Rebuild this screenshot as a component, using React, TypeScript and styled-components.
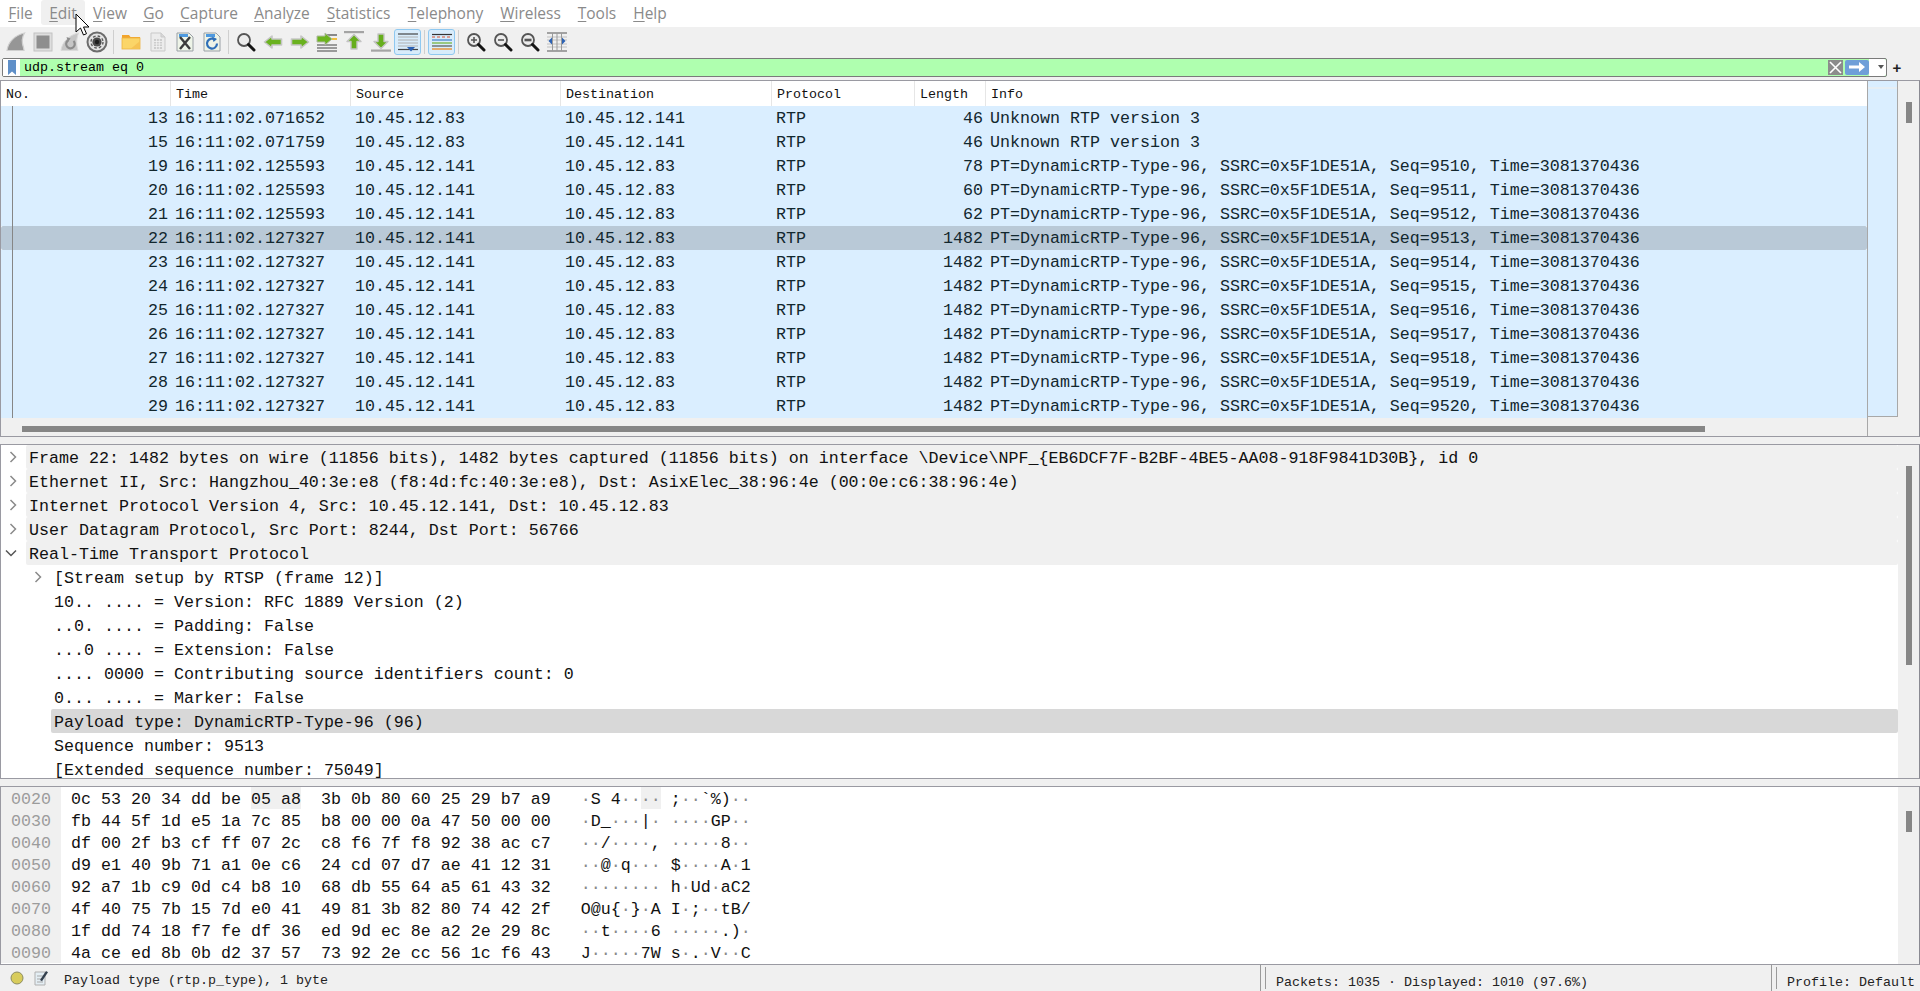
import React from "react";
import styled, { createGlobalStyle } from "styled-components";

const Global = createGlobalStyle`
  html, body { margin: 0; padding: 0; background: #f0f0f0; overflow: hidden; }
  #root { width: 1920px; height: 991px; }
`;

const MONO = `"Liberation Mono", "DejaVu Sans Mono", monospace`;

const Shell = styled.div`
  position: relative;
  width: 1920px;
  height: 991px;
  display: flex;
  flex-direction: column;
  background: #f0f0f0;
  overflow: hidden;
`;

const MenuBar = styled.div`
  display: flex;
  height: 27px;
  background: #ffffff;
  box-sizing: border-box;
  padding-bottom: 2px;
  font: 15.5px "Open Sans", "Noto Sans", sans-serif;
  color: #8a8a8a;
`;

const MenuItem = styled.div<{ $w: number; $hover?: boolean }>`
  width: ${(p) => p.$w}px;
  text-align: center;
  line-height: 26px;
  border-radius: 3px;
  background: ${(p) => (p.$hover ? "#f0f0f0" : "transparent")};
  u { text-underline-offset: 2px; text-decoration-thickness: 1px; }
`;

const Toolbar = styled.div`
  display: flex;
  align-items: center;
  height: 31px;
  box-sizing: border-box;
  padding: 1px 0 2px 2px;
  background: #f0f0f0;
`;

const ToolButton = styled.div<{ $on?: boolean }>`
  width: 27px;
  height: 26px;
  box-sizing: border-box;
  display: flex;
  align-items: center;
  justify-content: center;
  border-radius: 3px;
  border: 1px solid ${(p) => (p.$on ? "#8fc8f0" : "transparent")};
  background: ${(p) => (p.$on ? "#d8ecfb" : "transparent")};
`;

const ToolSep = styled.div`
  width: 7px;
  height: 24px;
  display: flex;
  justify-content: center;
  &::before { content: ""; width: 1px; background: #cfcfcf; }
`;

const FilterRow = styled.div`
  display: flex;
  align-items: center;
  height: 19px;
  margin-bottom: 3px;
  padding-left: 2px;
`;

const FilterBox = styled.div`
  width: 1885px;
  height: 19px;
  box-sizing: border-box;
  display: flex;
  align-items: center;
  border: 1px solid #7a7a7a;
  border-radius: 2px;
  background: #afffaf;
`;

const BookmarkCell = styled.div`
  width: 17px;
  height: 100%;
  background: #fff;
  display: flex;
  align-items: center;
  justify-content: center;
`;

const FilterText = styled.div`
  flex: 1;
  padding-left: 4px;
  font: 13.33px/19px ${MONO};
  color: #000;
`;

const FilterEnd = styled.div`
  width: 58px;
  height: 100%;
  display: flex;
  align-items: center;
  border-radius: 0 2px 2px 0;
  margin-left: -17px;
  background: linear-gradient(90deg, transparent 41px, #fff 41px);
`;

const ClearBtn = styled.div`
  width: 15px;
  height: 15px;
  background: #8c8c8c;
  display: flex;
  align-items: center;
  justify-content: center;
`;

const ApplyBtn = styled.div`
  width: 24px;
  height: 15px;
  margin-left: 2px;
  background: #6f9fd8;
  border-radius: 2px;
  display: flex;
  align-items: center;
  justify-content: center;
`;

const Caret = styled.div`
  margin-left: 9px;
  width: 0;
  height: 0;
  border-left: 3.5px solid transparent;
  border-right: 3.5px solid transparent;
  border-top: 4px solid #555;
`;

const PlusSign = styled.div`
  width: 26px;
  text-align: center;
  font: bold 15px/19px "Liberation Sans", sans-serif;
  color: #222;
  margin-left: -3px;
`;

const Panel = styled.div<{ $h: number }>`
  height: ${(p) => p.$h}px;
  box-sizing: border-box;
  border: 1px solid #9a9aa2;
  border-right-color: #8a8a92;
  display: flex;
  background: #fff;
  overflow: hidden;
`;

const PanelMain = styled.div`
  flex: 1;
  min-width: 0;
  display: flex;
  flex-direction: column;
`;

const ScrollTrack = styled.div`
  width: 21px;
  flex: none;
  box-sizing: border-box;
  padding-left: 8px;
  background: #f0f0f0;
`;

const ScrollThumb = styled.div<{ $top: number; $h: number }>`
  width: 6px;
  height: ${(p) => p.$h}px;
  margin-top: ${(p) => p.$top}px;
  background: #868686;
`;

const HeaderRow = styled.div`
  display: flex;
  height: 25px;
  background: #fff;
  font: 13.33px/27px ${MONO};
  color: #111;
`;

const HeaderCell = styled.div<{ $w: number }>`
  width: ${(p) => p.$w}px;
  box-sizing: border-box;
  padding-left: 5px;
  border-right: 1px solid #e6e6e6;
  &:last-child { flex: 1; border-right: none; }
`;

const PacketRow = styled.div<{ $sel?: boolean }>`
  display: flex;
  height: 24px;
  background: ${(p) => (p.$sel ? "#b9c9d7" : "#daeeff")};
  border-radius: ${(p) => (p.$sel ? "2px" : "0")};
  font: 16.67px/26px ${MONO};
  color: #12272e;
  white-space: pre;
`;

const PacketCell = styled.div<{ $w: number; $right?: boolean }>`
  width: ${(p) => p.$w}px;
  flex: none;
  box-sizing: border-box;
  padding: ${(p) => (p.$right ? "0 3px 0 0" : "0 0 0 4px")};
  text-align: ${(p) => (p.$right ? "right" : "left")};
`;

const NoCell = styled(PacketCell)`
  position: relative;
  &::before {
    content: "";
    position: absolute;
    left: 11px;
    top: 0;
    bottom: 0;
    width: 1px;
    background: #868686;
  }
`;

const ListBottom = styled.div`
  flex: 1;
  background: #f0f0f0;
  padding: 8px 0 0 21px;
`;

const HThumb = styled.div`
  width: 1683px;
  height: 6px;
  background: #868686;
`;

const ListSide = styled.div`
  width: 31px;
  flex: none;
  box-sizing: border-box;
  display: flex;
  flex-direction: column;
  border-left: 1px solid #a8a8a8;
`;

const MiniMap = styled.div`
  height: 336px;
  background: #daeeff;
  border-bottom: 1px solid #a8a8a8;
  border-right: 1px solid #a8a8a8;
  box-sizing: border-box;
  padding-top: 6px;
  &::before { content: ""; display: block; height: 2px; background: #e6eef4; }
`;

const MiniRest = styled.div`
  flex: 1;
  background: #f0f0f0;
`;

const Gap = styled.div`
  height: 7px;
  background: #f0f0f0;
`;

const DetailRow = styled.div`
  display: flex;
  height: 24px;
  align-items: flex-start;
  font: 16.67px/27px ${MONO};
  color: #111;
  white-space: pre;
`;

const Chevron = styled.div<{ $indent: number }>`
  width: ${(p) => p.$indent}px;
  height: 24px;
  flex: none;
  display: flex;
  align-items: center;
  justify-content: flex-end;
  padding-right: 9px;
  box-sizing: border-box;
`;

const DetailText = styled.div<{ $bg?: string }>`
  flex: 1;
  height: 24px;
  padding-left: 3px;
  background: ${(p) => p.$bg || "transparent"};
  border-radius: 2px;
`;

const HexRow = styled.div`
  display: flex;
  height: 22px;
  font: 16.67px/25px ${MONO};
  color: #111;
  white-space: pre;
`;

const HexOffset = styled.div`
  width: 60px;
  flex: none;
  box-sizing: border-box;
  padding-left: 10px;
  background: #f0f0f0;
  color: #9c9c9c;
`;

const HexBytes = styled.div`
  padding-left: 10px;
`;

const Mark = styled.span`
  display: inline-block;
  height: 22px;
  vertical-align: top;
  background: #f0f0f0;
`;

const Dot = styled.span`
  color: #8a8a8a;
`;

const StatusBar = styled.div`
  flex: 1;
  display: flex;
  align-items: center;
  font: 13.33px/26px ${MONO};
  color: #222;
  white-space: pre;
`;

const StatusLead = styled.div`
  width: 1260px;
  height: 26px;
  display: flex;
  align-items: center;
  padding-left: 10px;
  box-sizing: border-box;
`;

const StatusLabel = styled.div`
  margin-left: 15px;
  padding-top: 5px;
`;

const StatusSection = styled.div<{ $w?: number }>`
  width: ${(p) => (p.$w ? `${p.$w}px` : "auto")};
  flex: ${(p) => (p.$w ? "none" : 1)};
  height: 26px;
  box-sizing: border-box;
  padding: 5px 0 0 15px;
  border-left: 1px solid #9a9a9a;
  position: relative;
  &::before {
    content: "";
    position: absolute;
    left: 4px;
    top: 2px;
    bottom: 2px;
    width: 1px;
    background: #9a9a9a;
  }
`;

const Cursor = styled.svg`
  position: absolute;
  left: 75px;
  top: 13px;
`;

const Shark = () => (
  <svg width="20" height="20" viewBox="0 0 20 20">
    <path d="M1 18.5C2 10 9 3 18.5 1c-2.5 4-3 9-1 14.5l.5 3z" fill="#969696" stroke="#cfcfcf" strokeWidth="1.2" />
  </svg>
);

const StopIcon = () => (
  <svg width="20" height="20" viewBox="0 0 20 20">
    <rect x="1" y="1" width="18" height="18" fill="#dedede" stroke="#c2c2c2" />
    <rect x="3.5" y="3.5" width="13" height="13" fill="#8e8e8e" />
  </svg>
);

const RestartIcon = () => (
  <svg width="20" height="20" viewBox="0 0 20 20">
    <path d="M1 18.5C2 10 9 3 18.5 1c-2 5-2.5 11-.5 17.5z" fill="#c6c6c6" stroke="#dadada" />
    <path d="M13.5 9a4.3 4.3 0 1 1-5.5-.5" fill="none" stroke="#8c8c8c" strokeWidth="2.2" />
    <path d="M6.5 5l4 1.5-2.5 3.5z" fill="#8c8c8c" />
  </svg>
);

const OptionsIcon = () => (
  <svg width="22" height="22" viewBox="0 0 22 22">
    <circle cx="11" cy="11" r="9.5" fill="#e4e4e4" stroke="#6c6c6c" strokeWidth="2" />
    <circle cx="11" cy="11" r="6" fill="none" stroke="#5a5a5a" strokeWidth="1.4" strokeDasharray="2.6 2.1" />
    <circle cx="11" cy="11" r="4.6" fill="#4a4a4a" />
    <circle cx="11" cy="11" r="2.2" fill="#1e1e1e" />
  </svg>
);

const FolderIcon = () => (
  <svg width="20" height="20" viewBox="0 0 20 20">
    <path d="M1 6V3h7l1.5 2H19v1z" fill="#f2a42c" />
    <rect x="1" y="6" width="18" height="11" fill="#fbd568" stroke="#eeb240" strokeWidth="0.8" />
    <path d="M10 16.5l8.500-7v7z" fill="#f4bb4c" opacity=".7" />
  </svg>
);

const SheetIcon = () => (
  <svg width="20" height="20" viewBox="0 0 20 20">
    <path d="M3 1h10l4 4v14H3z" fill="#ececec" stroke="#c9c9c9" />
    <path d="M13 1v4h4" fill="#d8d8d8" stroke="#c9c9c9" />
    <path d="M6 7h8v10H6z" fill="#cdcdcd" />
    <path d="M6 9.5h8M6 12h8M6 14.5h8M8.6 7v10M11.3 7v10" stroke="#f4f4f4" strokeWidth=".8" />
  </svg>
);

const CloseFileIcon = () => (
  <svg width="20" height="20" viewBox="0 0 20 20">
    <path d="M2 1h12l4 4v14H2z" fill="#eef4e8" stroke="#9aa0a6" />
    <path d="M4 2h9v3H4z" fill="#4f9ae0" />
    <path d="M5 5l10 12M15 5L5 17" stroke="#3c3c3c" strokeWidth="2.4" />
  </svg>
);

const ReloadFileIcon = () => (
  <svg width="20" height="20" viewBox="0 0 20 20">
    <path d="M2 1h12l4 4v14H2z" fill="#eef4e8" stroke="#9aa0a6" />
    <path d="M4 2h9v3H4z" fill="#4f9ae0" />
    <path d="M13.5 8a5 5 0 1 0 1.5 3.5" fill="none" stroke="#2f6fb8" strokeWidth="2.2" />
    <path d="M10 4.5l5 2.500-3.500 3z" fill="#2f6fb8" />
  </svg>
);

const FindIcon = ({ kind }: { kind?: "in" | "out" | "normal" }) => (
  <svg width="20" height="20" viewBox="0 0 20 20">
    <circle cx="8" cy="8" r="6" fill="#ececec" stroke="#555" strokeWidth="1.8" />
    <path d="M12.5 12.5L18 18" stroke="#151515" strokeWidth="3" strokeLinecap="round" />
    {kind === "in" && <path d="M5 8h6M8 5v6" stroke="#555" strokeWidth="1.6" />}
    {kind === "out" && <path d="M5 8h6" stroke="#555" strokeWidth="1.6" />}
    {kind === "normal" && <path d="M4.5 8h7" stroke="#555" strokeWidth="2.6" />}
  </svg>
);

const GreenArrow = ({ flip }: { flip?: boolean }) => (
  <svg width="20" height="16" viewBox="0 0 20 16">
    <g transform={flip ? "rotate(180 10 8)" : undefined}>
      <path d="M1.5 8L9 2v3h9.5v6H9v3z" fill="#6ab21f" stroke="#c6c6c6" strokeWidth="1.6" strokeLinejoin="round" />
    </g>
  </svg>
);

const GotoIcon = () => (
  <svg width="22" height="20" viewBox="0 0 22 20">
    <path d="M10 3h11" stroke="#444" strokeWidth="1.2" />
    <path d="M12 7h9" stroke="#f0c040" strokeWidth="2" />
    <path d="M1 13h20M1 16h20M1 19h20" stroke="#444" strokeWidth="1.2" />
    <path d="M16 7l-7-6v3H1v6h8v3z" fill="#6cb41e" stroke="#b0b8a4" />
  </svg>
);

const EdgeIcon = ({ down }: { down?: boolean }) => (
  <svg width="20" height="21" viewBox="0 0 20 21">
    <rect x="0" y={down ? 18.5 : 0} width="20" height="2.2" fill="#a4a4a4" />
    <path
      d={down ? "M10 17.5L3 10.5h4V3h6v7.5h4z" : "M10 3.5l7 7h-4V18H7v-7.5H3z"}
      fill="#66ae1c"
      stroke="#c4c4c4"
      strokeWidth="1.4"
      strokeLinejoin="round"
    />
  </svg>
);

const AutoIcon = () => (
  <svg width="22" height="20" viewBox="0 0 22 20">
    <path d="M1 2h20" stroke="#444" strokeWidth="1.2" />
    <path d="M1 5h20M1 8h20M1 11h20M1 14h20" stroke="#b0b0b0" />
    <path d="M1 17.5h20" stroke="#444" strokeWidth="1.2" />
    <path d="M14 19.5l-4-4.500h8z" fill="#2c62b4" />
  </svg>
);

const ColorIcon = () => (
  <svg width="22" height="20" viewBox="0 0 22 20">
    <path d="M1 2.5h20" stroke="#333" strokeWidth="1.2" />
    <path d="M1 5h20" stroke="#d85030" strokeWidth="1" strokeDasharray="3 2" />
    <path d="M1 8h20" stroke="#3f80c8" strokeWidth="1.2" />
    <path d="M1 11h20" stroke="#70b030" strokeWidth="1.2" />
    <path d="M1 14h20" stroke="#555" strokeWidth="1.2" />
    <path d="M1 17h20" stroke="#e89030" strokeWidth="1.4" />
  </svg>
);

const ResizeIcon = () => (
  <svg width="20" height="20" viewBox="0 0 20 20">
    <path d="M0 1h20M0 19h20" stroke="#555" strokeWidth="1.2" />
    <path d="M0 5h20M0 8h20M0 12h20M0 15h20" stroke="#c0c0c0" />
    <path d="M5.5 1v18M14.5 1v18M10 1v18" stroke="#9a9a9a" />
    <path d="M5 5.5v7L1.5 9zM15 5.5v7L18.5 9z" fill="#2c62b4" />
  </svg>
);

const packets: [string, string, string, string, string][] = [
  ["13", "16:11:02.071652", "10.45.12.83", "10.45.12.141", "46"],
  ["15", "16:11:02.071759", "10.45.12.83", "10.45.12.141", "46"],
  ["19", "16:11:02.125593", "10.45.12.141", "10.45.12.83", "78"],
  ["20", "16:11:02.125593", "10.45.12.141", "10.45.12.83", "60"],
  ["21", "16:11:02.125593", "10.45.12.141", "10.45.12.83", "62"],
  ["22", "16:11:02.127327", "10.45.12.141", "10.45.12.83", "1482"],
  ["23", "16:11:02.127327", "10.45.12.141", "10.45.12.83", "1482"],
  ["24", "16:11:02.127327", "10.45.12.141", "10.45.12.83", "1482"],
  ["25", "16:11:02.127327", "10.45.12.141", "10.45.12.83", "1482"],
  ["26", "16:11:02.127327", "10.45.12.141", "10.45.12.83", "1482"],
  ["27", "16:11:02.127327", "10.45.12.141", "10.45.12.83", "1482"],
  ["28", "16:11:02.127327", "10.45.12.141", "10.45.12.83", "1482"],
  ["29", "16:11:02.127327", "10.45.12.141", "10.45.12.83", "1482"],
];
const seqs = [0, 0, 9510, 9511, 9512, 9513, 9514, 9515, 9516, 9517, 9518, 9519, 9520];

const details: { t: string; lvl: 0 | 1; ch?: "r" | "d"; shade?: boolean; sel?: boolean }[] = [
  { t: "Frame 22: 1482 bytes on wire (11856 bits), 1482 bytes captured (11856 bits) on interface \\Device\\NPF_{EB6DCF7F-B2BF-4BE5-AA08-918F9841D30B}, id 0", lvl: 0, ch: "r", shade: true },
  { t: "Ethernet II, Src: Hangzhou_40:3e:e8 (f8:4d:fc:40:3e:e8), Dst: AsixElec_38:96:4e (00:0e:c6:38:96:4e)", lvl: 0, ch: "r", shade: true },
  { t: "Internet Protocol Version 4, Src: 10.45.12.141, Dst: 10.45.12.83", lvl: 0, ch: "r", shade: true },
  { t: "User Datagram Protocol, Src Port: 8244, Dst Port: 56766", lvl: 0, ch: "r", shade: true },
  { t: "Real-Time Transport Protocol", lvl: 0, ch: "d", shade: true },
  { t: "[Stream setup by RTSP (frame 12)]", lvl: 1, ch: "r" },
  { t: "10.. .... = Version: RFC 1889 Version (2)", lvl: 1 },
  { t: "..0. .... = Padding: False", lvl: 1 },
  { t: "...0 .... = Extension: False", lvl: 1 },
  { t: ".... 0000 = Contributing source identifiers count: 0", lvl: 1 },
  { t: "0... .... = Marker: False", lvl: 1 },
  { t: "Payload type: DynamicRTP-Type-96 (96)", lvl: 1, sel: true },
  { t: "Sequence number: 9513", lvl: 1 },
  { t: "[Extended sequence number: 75049]", lvl: 1 },
];

const hexRows: [string, string[]][] = [
  ["0020", "0c 53 20 34 dd be 05 a8 3b 0b 80 60 25 29 b7 a9".split(" ")],
  ["0030", "fb 44 5f 1d e5 1a 7c 85 b8 00 00 0a 47 50 00 00".split(" ")],
  ["0040", "df 00 2f b3 cf ff 07 2c c8 f6 7f f8 92 38 ac c7".split(" ")],
  ["0050", "d9 e1 40 9b 71 a1 0e c6 24 cd 07 d7 ae 41 12 31".split(" ")],
  ["0060", "92 a7 1b c9 0d c4 b8 10 68 db 55 64 a5 61 43 32".split(" ")],
  ["0070", "4f 40 75 7b 15 7d e0 41 49 81 3b 82 80 74 42 2f".split(" ")],
  ["0080", "1f dd 74 18 f7 fe df 36 ed 9d ec 8e a2 2e 29 8c".split(" ")],
  ["0090", "4a ce ed 8b 0b d2 37 57 73 92 2e cc 56 1c f6 43".split(" ")],
];

const asc = (b: string[]) =>
  b.map((h, i) => {
    const c = parseInt(h, 16);
    return c >= 32 && c < 127 ? String.fromCharCode(c) : <Dot key={i}>·</Dot>;
  });

const menus: [string, string, number][] = [
  ["F", "ile", 41],
  ["E", "dit", 44],
  ["V", "iew", 50],
  ["G", "o", 37],
  ["C", "apture", 74],
  ["A", "nalyze", 72],
  ["S", "tatistics", 81],
  ["T", "elephony", 93],
  ["W", "ireless", 77],
  ["T", "ools", 56],
  ["H", "elp", 50],
];

const colWidths = [170, 180, 210, 211, 143, 71];

const ChevronRight = () => (
  <svg width="8" height="12" viewBox="0 0 8 12">
    <path d="M1.5 1L6.5 6l-5 5" fill="none" stroke="#8a8a8a" strokeWidth="1.5" />
  </svg>
);
const ChevronDown = () => (
  <svg width="12" height="8" viewBox="0 0 12 8">
    <path d="M1 1.5L6 6.5l5-5" fill="none" stroke="#555" strokeWidth="1.5" />
  </svg>
);

export default function App() {
  return (
    <Shell>
      <Global />
      <MenuBar>
        {menus.map(([a, b, w], i) => (
          <MenuItem key={i} $w={w} $hover={i === 1}>
            <u>{a}</u>
            {b}
          </MenuItem>
        ))}
      </MenuBar>
      <Toolbar>
        <ToolButton><Shark /></ToolButton>
        <ToolButton><StopIcon /></ToolButton>
        <ToolButton><RestartIcon /></ToolButton>
        <ToolButton><OptionsIcon /></ToolButton>
        <ToolSep />
        <ToolButton><FolderIcon /></ToolButton>
        <ToolButton><SheetIcon /></ToolButton>
        <ToolButton><CloseFileIcon /></ToolButton>
        <ToolButton><ReloadFileIcon /></ToolButton>
        <ToolSep />
        <ToolButton><FindIcon /></ToolButton>
        <ToolButton><GreenArrow /></ToolButton>
        <ToolButton><GreenArrow flip /></ToolButton>
        <ToolButton><GotoIcon /></ToolButton>
        <ToolButton><EdgeIcon /></ToolButton>
        <ToolButton><EdgeIcon down /></ToolButton>
        <ToolButton $on><AutoIcon /></ToolButton>
        <ToolSep />
        <ToolButton $on><ColorIcon /></ToolButton>
        <ToolSep />
        <ToolButton><FindIcon kind="in" /></ToolButton>
        <ToolButton><FindIcon kind="out" /></ToolButton>
        <ToolButton><FindIcon kind="normal" /></ToolButton>
        <ToolButton><ResizeIcon /></ToolButton>
      </Toolbar>
      <FilterRow>
        <FilterBox>
          <BookmarkCell>
            <svg width="8" height="15" viewBox="0 0 8 15">
              <path d="M0 0h8v15L4 11.5 0 15z" fill="#5f8fc8" />
            </svg>
          </BookmarkCell>
          <FilterText>udp.stream eq 0</FilterText>
          <FilterEnd>
            <ClearBtn>
              <svg width="13" height="13" viewBox="0 0 13 13">
                <path d="M1 1l11 11M12 1L1 12" stroke="#fff" strokeWidth="1.6" />
              </svg>
            </ClearBtn>
            <ApplyBtn>
              <svg width="16" height="10" viewBox="0 0 16 10">
                <path d="M0 3.5h10V0l6 5-6 5V6.5H0z" fill="#fff" />
              </svg>
            </ApplyBtn>
            <Caret />
          </FilterEnd>
        </FilterBox>
        <PlusSign>+</PlusSign>
      </FilterRow>
      <Panel $h={358}>
        <PanelMain>
          <HeaderRow>
            {["No.", "Time", "Source", "Destination", "Protocol", "Length", "Info"].map((h, i) => (
              <HeaderCell key={h} $w={colWidths[i] ?? 0}>
                {h}
              </HeaderCell>
            ))}
          </HeaderRow>
          {packets.map((p, i) => (
            <PacketRow key={p[0]} $sel={p[0] === "22"}>
              <NoCell $w={170} $right>{p[0]}</NoCell>
              <PacketCell $w={180}>{p[1]}</PacketCell>
              <PacketCell $w={210}>{p[2]}</PacketCell>
              <PacketCell $w={211}>{p[3]}</PacketCell>
              <PacketCell $w={143}>RTP</PacketCell>
              <PacketCell $w={71} $right>{p[4]}</PacketCell>
              <PacketCell $w={870}>
                {i < 2
                  ? "Unknown RTP version 3"
                  : `PT=DynamicRTP-Type-96, SSRC=0x5F1DE51A, Seq=${seqs[i]}, Time=3081370436`}
              </PacketCell>
            </PacketRow>
          ))}
          <ListBottom>
            <HThumb />
          </ListBottom>
        </PanelMain>
        <ListSide>
          <MiniMap />
          <MiniRest />
        </ListSide>
        <ScrollTrack>
          <ScrollThumb $top={21} $h={21} />
        </ScrollTrack>
      </Panel>
      <Gap />
      <Panel $h={336}>
        <PanelMain>
          {details.map((d, i) => (
            <DetailRow key={i}>
              <Chevron $indent={d.lvl === 0 ? 25 : 50}>
                {d.ch === "r" && <ChevronRight />}
                {d.ch === "d" && <ChevronDown />}
              </Chevron>
              <DetailText $bg={d.sel ? "#d8d8d8" : d.shade ? "#f0f0f0" : undefined}>{d.t}</DetailText>
            </DetailRow>
          ))}
        </PanelMain>
        <ScrollTrack>
          <ScrollThumb $top={21} $h={199} />
        </ScrollTrack>
      </Panel>
      <Gap />
      <Panel $h={179}>
        <PanelMain>
          {hexRows.map(([off, b], i) => (
            <HexRow key={off}>
              <HexOffset>{off}</HexOffset>
              <HexBytes>
                {i === 0 ? (
                  <>
                    {b.slice(0, 6).join(" ")} <Mark>{b.slice(6, 8).join(" ")}</Mark>
                  </>
                ) : (
                  b.slice(0, 8).join(" ")
                )}
                {"  "}
                {b.slice(8).join(" ")}
                {"   "}
                {i === 0 ? (
                  <>
                    {asc(b.slice(0, 6))}
                    <Mark>{asc(b.slice(6, 8))}</Mark>
                  </>
                ) : (
                  asc(b.slice(0, 8))
                )}
                {" "}
                {asc(b.slice(8))}
              </HexBytes>
            </HexRow>
          ))}
        </PanelMain>
        <ScrollTrack>
          <ScrollThumb $top={24} $h={21} />
        </ScrollTrack>
      </Panel>
      <StatusBar>
        <StatusLead>
          <svg width="14" height="14" viewBox="0 0 14 14">
            <circle cx="7" cy="7" r="6" fill="#d8cc5c" stroke="#8c8c60" />
          </svg>
          <svg width="16" height="18" viewBox="0 0 16 18" style={{ marginLeft: 9 }}>
            <path d="M2 3h10v13H2z" fill="#e4eef4" stroke="#b0b0b0" />
            <path d="M4 7h6M4 10h6M4 13h6" stroke="#a8a8a8" />
            <path d="M7 11l6-9 2 1.3-6 9z" fill="#34404e" />
          </svg>
          <StatusLabel>Payload type (rtp.p_type), 1 byte</StatusLabel>
        </StatusLead>
        <StatusSection $w={511}>Packets: 1035 · Displayed: 1010 (97.6%)</StatusSection>
        <StatusSection>Profile: Default</StatusSection>
      </StatusBar>
      <Cursor width="17" height="24" viewBox="0 0 17 24">
        <path d="M1 1v18l4.5-4 3 7 3-1.3-3-6.7H14z" fill="#fff" stroke="#000" strokeWidth="1" />
      </Cursor>
    </Shell>
  );
}
